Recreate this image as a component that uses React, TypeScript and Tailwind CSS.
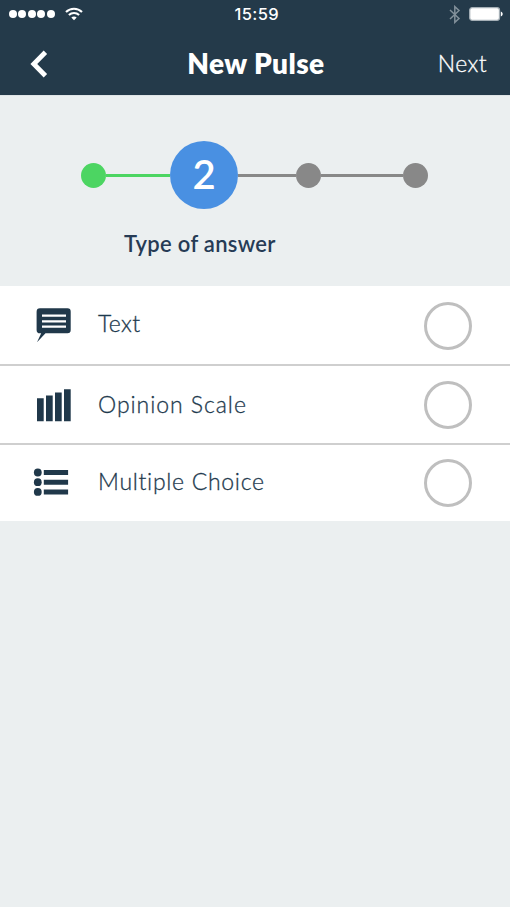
import type { ReactNode } from "react";
import clsx from "clsx";

type AnswerType = {
  label: string;
  icon: ReactNode;
  rowClass: string;
  labelClass: string;
};

function WifiIcon() {
  return (
    <svg width="18" height="14" viewBox="0 0 18 14" fill="none" stroke="white" strokeWidth="2.1">
      <path d="M1 5.1C5.5 .6 12.5 .6 17 5.1" />
      <path d="M3.9 8.1c2.9-2.8 7.3-2.8 10.2 0" />
      <path d="M9 13.2 6.3 10.5c1.5-1.4 3.9-1.4 5.4 0Z" fill="white" stroke="none" />
    </svg>
  );
}

function BluetoothIcon() {
  return (
    <svg width="12" height="19" viewBox="0 0 12 19" fill="none" stroke="#82909a" strokeWidth="1.5">
      <path d="m1 5 9 8.5L5.8 17.4V1.6L10 5.5 1 14" />
    </svg>
  );
}

function BatteryIcon() {
  return (
    <svg width="34" height="14" viewBox="0 0 34 14">
      <rect x=".7" y=".7" width="29.8" height="12.6" rx="2.5" fill="white" stroke="#a5afb6" strokeWidth="1.3" />
      <path d="M31.8 4.5c2.5.8 2.5 4.2 0 5Z" fill="white" />
    </svg>
  );
}

function ChatIcon() {
  return (
    <svg width="37" height="36" viewBox="0 0 37 36" fill="#20384a">
      <path d="M5 .3h27.5a3.2 3.2 0 0 1 3.2 3.2v18.6a3.2 3.2 0 0 1-3.2 3.2H10.5L2 34.3l4.2-9H5a3.4 3.4 0 0 1-3.4-3.4V3.7A3.4 3.4 0 0 1 5 .3Z" />
      <path d="M7 7.6h24M7 13.3h24M7 18.7h24" stroke="white" strokeWidth="2.3" />
    </svg>
  );
}

function ScaleIcon() {
  return (
    <svg width="37" height="34" viewBox="0 0 37 34" fill="#20384a">
      <path d="M2 10.3h6.7v22.9H2zM11 7.5h6.7v25.7H11zM20 4.5h6.7v28.7H20zM29 1.2h6.7v32H29z" />
    </svg>
  );
}

function ListIcon() {
  return (
    <svg width="37" height="30" viewBox="0 0 37 30" fill="#20384a">
      <circle cx="4.8" cy="4.5" r="3.9" />
      <circle cx="4.8" cy="14.2" r="3.9" />
      <circle cx="4.8" cy="23.9" r="3.9" />
      <path d="M10.8 2h24.3v5H10.8zM10.8 11.7h24.3v5H10.8zM10.8 21.4h24.3v5H10.8z" />
    </svg>
  );
}

const answerTypes: AnswerType[] = [
  {
    label: "Text",
    icon: <ChatIcon />,
    rowClass: "h-20 border-b-2 border-[#cfcfcf] pl-[35px] pt-px",
    labelClass: "ml-[26px] tracking-[0.4px] -mt-1.5",
  },
  {
    label: "Opinion Scale",
    icon: <ScaleIcon />,
    rowClass: "h-[79px] border-b-2 border-[#cfcfcf] pl-[35px]",
    labelClass: "ml-[26px] tracking-[0.95px] -mt-0.5",
  },
  {
    label: "Multiple Choice",
    icon: <ListIcon />,
    rowClass: "h-[76px] pl-[33px]",
    labelClass: "ml-7 tracking-[0.7px] -mt-1",
  },
];

function StatusBar() {
  return (
    <div className="grid h-7 grid-cols-3 items-center pl-[8.5px] pr-[7px]">
      <div className="flex items-center">
        <div className="flex gap-[1.6px]">
          {[0, 1, 2, 3, 4].map((dot) => (
            <span key={dot} className="size-2 rounded-full bg-white" />
          ))}
        </div>
        <span className="ml-2.5">
          <WifiIcon />
        </span>
      </div>
      <span className="pl-0.5 text-center font-['Inter',sans-serif] text-[16.5px] font-medium leading-none tracking-[0.4px]">
        15:59
      </span>
      <div className="flex items-center justify-end gap-2">
        <BluetoothIcon />
        <BatteryIcon />
      </div>
    </div>
  );
}

function Header() {
  return (
    <header className="h-24 border-b border-[#dfe4e6] bg-[#243a4a] text-white">
      <StatusBar />
      <div className="flex h-[67px] items-center justify-between pb-[3px] pl-[30px] pr-[23px] pt-1.5">
        <button type="button" aria-label="Back" className="w-5 pt-px">
          <svg width="18" height="28" viewBox="0 0 18 28" fill="none" stroke="white" strokeWidth="4.8">
            <path d="M15.4 2.2 3.8 14l11.6 11.8" />
          </svg>
        </button>
        <h1 className="ml-6 text-[28px] font-extrabold leading-none tracking-[0.4px]">New Pulse</h1>
        <button
          type="button"
          className="text-[23px] font-light leading-none tracking-[0.4px] [-webkit-text-stroke:0.3px]"
        >
          Next
        </button>
      </div>
    </header>
  );
}

function StepDot({ done }: { done?: boolean }) {
  return (
    <span className={clsx("size-[25px] shrink-0 rounded-full", done ? "bg-[#4cd562]" : "bg-[#888888]")} />
  );
}

function Steps() {
  return (
    <section className="h-[190px] pt-[45px]">
      <div className="flex items-center pl-[81.4px]">
        <StepDot done />
        <span className="h-[3px] w-[63.6px] bg-[#4cd562]" />
        <span className="flex size-[68px] items-center justify-center rounded-full bg-[#4990e2] pb-0.5 text-[40px] font-semibold leading-none text-white">
          2
        </span>
        <span className="h-[3px] w-[58px] bg-[#888888]" />
        <StepDot />
        <span className="h-[3px] w-[82.4px] bg-[#888888]" />
        <StepDot />
      </div>
      <p className="ml-[124px] mt-[21px] text-[22px] font-semibold leading-7 tracking-[0.3px] text-[#263b55]">
        Type of answer
      </p>
    </section>
  );
}

export default function App() {
  return (
    <main className="min-h-screen w-full bg-[#ebeff0] font-['Lato',sans-serif]">
      <Header />
      <Steps />
      <div className="bg-white">
        {answerTypes.map((type) => (
          <label key={type.label} className={clsx("flex items-center pr-[38px]", type.rowClass)}>
            {type.icon}
            <span
              className={clsx(
                "flex-1 text-[23px] font-light leading-7 text-[#1e3a4e] [-webkit-text-stroke:0.3px]",
                type.labelClass,
              )}
            >
              {type.label}
            </span>
            <span className="size-12 rounded-full border-3 border-[#bfbfbf]" />
          </label>
        ))}
      </div>
    </main>
  );
}
